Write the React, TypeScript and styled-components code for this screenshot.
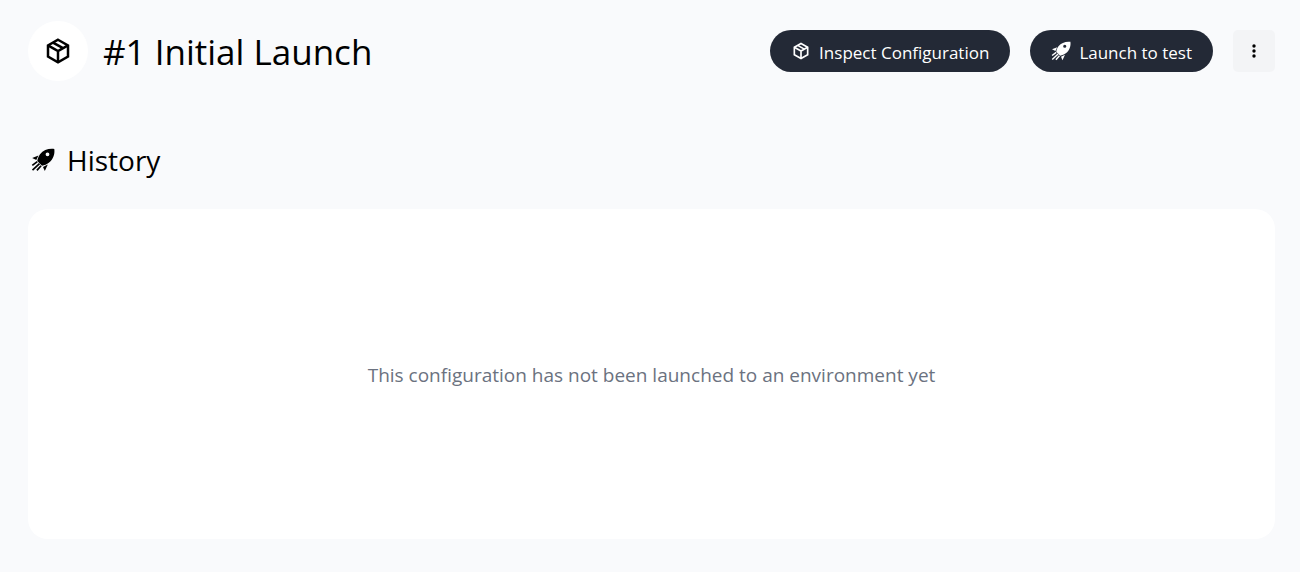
import React from "react";
import styled, { createGlobalStyle } from "styled-components";

const GlobalStyle = createGlobalStyle`
  *, *::before, *::after { box-sizing: border-box; }
  body {
    margin: 0;
    background: #f9fafc;
    color: #000;
    font-family: "Segoe UI", "Open Sans", "Noto Sans", sans-serif;
  }
`;

const Page = styled.main`
  padding: 21px 25px 33px 28px;
`;

const Header = styled.header`
  display: flex;
  align-items: center;
  justify-content: space-between;
  gap: 20px;
`;

const TitleGroup = styled.div`
  display: flex;
  align-items: center;
  gap: 15px;
`;

const Badge = styled.span`
  display: flex;
  align-items: center;
  justify-content: center;
  width: 60px;
  height: 60px;
  border-radius: 50%;
  background: #fff;
`;

const Title = styled.h1`
  margin: 0;
  padding-top: 2px;
  font-size: 35px;
  font-weight: 400;
  line-height: 58px;
  white-space: nowrap;
`;

const Actions = styled.div`
  display: flex;
  align-items: center;
  gap: 20px;
`;

const PillButton = styled.button`
  display: flex;
  align-items: center;
  gap: 8px;
  height: 42px;
  padding: 0 21px;
  border: 0;
  border-radius: 21px;
  background: #232936;
  color: #fff;
  font-family: inherit;
  font-size: 17px;
  line-height: 24px;
  white-space: nowrap;
  cursor: pointer;
`;

const ButtonLabel = styled.span`
  padding-top: 3px;
`;

const MenuButton = styled.button`
  display: flex;
  align-items: center;
  justify-content: center;
  width: 42px;
  height: 42px;
  padding: 0;
  border: 0;
  border-radius: 5px;
  background: #f3f4f6;
  color: #000;
  cursor: pointer;
`;

const SectionTitle = styled.h2`
  display: flex;
  align-items: center;
  gap: 12px;
  margin: 59px 0 29px;
  padding-left: 3px;
  font-size: 28px;
  font-weight: 400;
  line-height: 40px;
`;

const EmptyPanel = styled.section`
  display: flex;
  align-items: center;
  justify-content: center;
  min-height: 330px;
  padding: 22px 20px 20px;
  border-radius: 20px;
  background: #fff;
  color: #6b7280;
  font-size: 19px;
  line-height: 28px;
`;

const Message = styled.p`
  margin: 0;
`;

function PackageIcon({ size }: { size: number }) {
  return (
    <svg width={size} height={size} viewBox="0 0 24 24" fill="none" stroke="currentColor" strokeWidth="2" aria-hidden="true">
      <path d="M12 3l8 4.5v9L12 21l-8-4.5v-9z" />
      <path d="M4 7.5l8 4.5 8-4.5M12 12v9M8 5.25l8 4.5" />
    </svg>
  );
}

function RocketIcon({ size }: { size: number }) {
  return (
    <svg width={size} height={size} viewBox="0 0 24 24" fill="currentColor" aria-hidden="true">
      <path
        fillRule="evenodd"
        d="M23.3 .9C17.6 .2 12.4 2 9 6.200 7.500 8.200 6.500 11 6.300 13l4.700 4.700c2.300-.3 5-1.400 6.800-2.900C22.300 11.200 24 6.200 23.300 .9zM16.500 4.400a1.900 1.900 0 1 1 0 3.800 1.900 1.900 0 0 1 0-3.800z"
      />
      <path d="M1.200 10L7.400 7.400 5.300 12z" />
      <path d="M12 19l4.800-2.600-3 6.600z" />
      <path d="M1.300 17.400l5-3.800M1.500 22.200l7-6.600M5.900 22.400l4.200-4.600" fill="none" stroke="currentColor" strokeWidth="1.7" />
    </svg>
  );
}

function DotsIcon() {
  return (
    <svg width="20" height="20" viewBox="0 0 20 20" fill="currentColor" aria-hidden="true">
      <circle cx="10" cy="5" r="1.7" />
      <circle cx="10" cy="10" r="1.7" />
      <circle cx="10" cy="15" r="1.7" />
    </svg>
  );
}

export default function App() {
  return (
    <>
      <GlobalStyle />
      <Page>
        <Header>
          <TitleGroup>
            <Badge>
              <PackageIcon size={30} />
            </Badge>
            <Title>#1 Initial Launch</Title>
          </TitleGroup>
          <Actions>
            <PillButton type="button">
              <PackageIcon size={20} />
              <ButtonLabel>Inspect Configuration</ButtonLabel>
            </PillButton>
            <PillButton type="button">
              <RocketIcon size={20} />
              <ButtonLabel>Launch to test</ButtonLabel>
            </PillButton>
            <MenuButton type="button" aria-label="More actions">
              <DotsIcon />
            </MenuButton>
          </Actions>
        </Header>
        <SectionTitle>
          <RocketIcon size={24} />
          History
        </SectionTitle>
        <EmptyPanel>
          <Message>This configuration has not been launched to an environment yet</Message>
        </EmptyPanel>
      </Page>
    </>
  );
}
